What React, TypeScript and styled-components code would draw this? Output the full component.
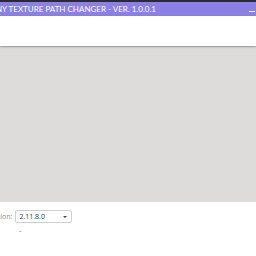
import { createGlobalStyle, styled } from "styled-components"

const Global = createGlobalStyle`
    html, body {
        margin: 0;
        padding: 0;
        width: 256px;
        height: 256px;
        overflow: hidden;
        background: #ffffff;
        font-family: "Open Sans", "Noto Sans", sans-serif;
    }
`

const Window = styled.div`
    display: flex;
    flex-direction: column;
    width: 256px;
    height: 256px;
    border-top: 2px solid #2b2b2b;
    box-sizing: border-box;
    overflow: hidden;
`

const TitleBar = styled.div`
    display: flex;
    align-items: center;
    justify-content: space-between;
    height: 14px;
    background: #8a80e6;
    color: #ffffff;
    font-family: Lato, "Open Sans", sans-serif;
    font-size: 8px;
    white-space: nowrap;

    .title {
        margin-left: -11px;
    }

    .min {
        width: 6px;
        height: 1px;
        background: #ffffff;
        margin-right: 1px;
        margin-top: 4px;
    }
`

const Toolbar = styled.div`
    height: 30px;
    background: #ffffff;
    box-shadow: 0 1px 2px rgba(0, 0, 0, 0.25);
    position: relative;
    z-index: 1;
`

const Preview = styled.div`
    height: 155px;
    background: #dddcda;
    border-top: 1px solid #c4c4c4;
`

const Footer = styled.div`
    display: flex;
    flex-direction: column;
    padding: 8px 0 0 0;
    font-size: 7px;
    color: #333;
`

const Row = styled.div`
    display: flex;
    align-items: center;
    gap: 3px;

    label {
        margin-left: -14px;
        color: #8290a4;
        font-size: 7px;
    }
`

const Select = styled.div`
    display: flex;
    align-items: center;
    justify-content: space-between;
    box-sizing: border-box;
    width: 57px;
    height: 13px;
    border: 1px solid #cfcfcf;
    border-radius: 2px;
    padding: 0 4px 0 3px;
    color: #333;
    font-size: 7px;

    .arrow {
        width: 0;
        height: 0;
        border-left: 2px solid transparent;
        border-right: 2px solid transparent;
        border-top: 2px solid #444;
    }
`

const Note = styled.div`
    margin: 4px 0 0 19px;
    color: #555;
    font-size: 7px;
    line-height: 8px;
`

export default function App() {
    return <>
        <Global />
        <Window>
            <TitleBar>
                <span className="title">TINY TEXTURE PATH CHANGER - VER. 1.0.0.1</span>
                <span className="min" />
            </TitleBar>
            <Toolbar />
            <Preview />
            <Footer>
                <Row>
                    <label>Version:</label>
                    <Select>
                        <span>2.11.8.0</span>
                        <span className="arrow" />
                    </Select>
                </Row>
                <Note>-</Note>
            </Footer>
        </Window>
    </>
}
